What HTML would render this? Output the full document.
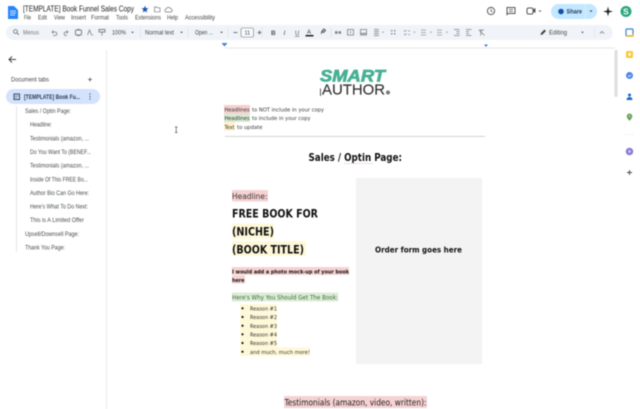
<!DOCTYPE html>
<html><head><meta charset="utf-8"><style>
html,body{margin:0;padding:0;background:#fff;width:640px;height:409px;overflow:hidden}
svg{display:block;filter:blur(.45px)}
text{font-family:"Liberation Sans",sans-serif;fill:#3c4043}
.m{font-size:6.300px;fill:#444746}
.s{font-size:6.300px;fill:#444746}
.t{font-size:6px;fill:#4a4d50}
.o{font-family:"DejaVu Sans",sans-serif}
.d{font-family:"DejaVu Sans",sans-serif;font-size:5.600px;fill:#333}
.b{font-family:"DejaVu Sans",sans-serif;font-weight:bold;fill:#111}
</style></head><body>
<svg width="640" height="409" viewBox="0 0 640 409" xmlns="http://www.w3.org/2000/svg">
<rect width="640" height="409" fill="#fff"/>
<!-- header -->
<path d="M8 6h6l4 4v9H8z" fill="#2684fc"/><path d="M10 11h6M10 13h6M10 15h5" stroke="#fff" stroke-width=".8"/>
<text x="23" y="11.500" font-size="8" textLength="111" lengthAdjust="spacingAndGlyphs" style="fill:#202124">[TEMPLATE] Book Funnel Sales Copy</text>
<path d="M145 5.800l1 2.300 2.500.2-1.900 1.600.6 2.500-2.200-1.300-2.200 1.300.6-2.500-1.900-1.600 2.500-.2z" fill="#1a56b8"/>
<path d="M154.500 7h2.200l.8.8h2.500v4h-5.500z" fill="none" stroke="#777" stroke-width=".7"/>
<path d="M167 12h3.500a1.600 1.600 0 0 0 .2-3.200 2.400 2.400 0 0 0-4.400 0 1.600 1.600 0 0 0 .7 3.200z" fill="none" stroke="#777" stroke-width=".7"/>
<text class="m" x="24" y="19.500" textLength="7" lengthAdjust="spacingAndGlyphs">File</text>
<text class="m" x="38" y="19.500" textLength="9" lengthAdjust="spacingAndGlyphs">Edit</text>
<text class="m" x="54" y="19.500" textLength="11" lengthAdjust="spacingAndGlyphs">View</text>
<text class="m" x="71" y="19.500" textLength="15" lengthAdjust="spacingAndGlyphs">Insert</text>
<text class="m" x="91" y="19.500" textLength="18" lengthAdjust="spacingAndGlyphs">Format</text>
<text class="m" x="116" y="19.500" textLength="12" lengthAdjust="spacingAndGlyphs">Tools</text>
<text class="m" x="135" y="19.500" textLength="26" lengthAdjust="spacingAndGlyphs">Extensions</text>
<text class="m" x="167" y="19.500" textLength="11" lengthAdjust="spacingAndGlyphs">Help</text>
<text class="m" x="185" y="19.500" textLength="30" lengthAdjust="spacingAndGlyphs">Accessibility</text>
<!-- right header -->
<circle cx="491" cy="11" r="3.600" fill="none" stroke="#555" stroke-width="1"/><path d="M491 9v2l1.500 1" stroke="#555" stroke-width=".8" fill="none"/>
<path d="M507 7.500h8v6h-7l-1 1z" fill="none" stroke="#555" stroke-width="1"/><path d="M509 9.500h4M509 11.500h4" stroke="#555" stroke-width=".7"/>
<rect x="527" y="8" width="6" height="6" rx="1.500" fill="none" stroke="#555" stroke-width="1"/><path d="M533 9.500l2.500-1.500v5l-2.500-1.500z" fill="#555"/>
<path d="M538.500 10.500h3l-1.500 1.500z" fill="#555"/>
<rect x="551" y="4" width="46" height="15" rx="7.500" fill="#c2e7ff"/>
<path d="M585.500 4v15" stroke="#e8f4fd" stroke-width=".6"/>
<circle cx="561" cy="11.500" r="2.800" fill="#174ea6"/>
<text x="566.500" y="13.500" font-size="6" font-weight="bold" textLength="15.500" lengthAdjust="spacingAndGlyphs" style="fill:#1f3a5f">Share</text>
<path d="M589.500 10.500h3l-1.500 1.500z" fill="#333"/>
<path d="M608 6.500l1 4 4 1-4 1-1 4-1-4-4-1 4-1z" fill="#222"/>
<circle cx="626" cy="11.500" r="5.500" fill="#2aa77d"/>
<text x="623" y="14.500" font-size="8.500" font-weight="bold" style="fill:#fff">S</text>
<!-- toolbar -->
<rect x="6" y="25" width="287" height="15" rx="7.500" fill="#f0f4f9"/>
<rect x="200" y="25" width="413" height="15" rx="7.500" fill="#f0f4f9"/>
<circle cx="15.500" cy="31.500" r="1.900" fill="none" stroke="#666" stroke-width=".8"/><path d="M17 33l1.800 1.800" stroke="#666" stroke-width=".8"/>
<text class="s" x="23" y="34.500" textLength="16" lengthAdjust="spacingAndGlyphs" style="fill:#777">Menus</text>
<g opacity=".72">
<path d="M52 32h3.500a1.800 1.800 0 0 1 0 3.500H53M53.500 30.500L52 32l1.500 1.500" fill="none" stroke="#555" stroke-width=".8"/>
<path d="M68 32h-2.500a1.800 1.800 0 0 0 0 3.500H67M66.500 30.500L68 32l-1.500 1.500" fill="none" stroke="#555" stroke-width=".8"/>
<rect x="75.500" y="30" width="6" height="5" rx="1" fill="none" stroke="#555" stroke-width="1"/><path d="M77 29.500h3M77 35.500h3" stroke="#555" stroke-width="1"/>
<path d="M87.500 35l2-5 2 5M92 35.500l1-1" fill="none" stroke="#555" stroke-width=".8"/>
<path d="M99 29.500h6v2.500h-6zM102 32v3.500" fill="none" stroke="#555" stroke-width=".9"/>
</g>
<text class="s" x="112" y="34.500" textLength="14" lengthAdjust="spacingAndGlyphs">100%</text>
<path d="M131 31.800h3l-1.500 1.500z" fill="#555"/>
<path d="M140.500 27.500v10M188 27.500v10M228 27.500v10M262 27.500v10M331 27.500v10M376 27.500v10" stroke="#dadce0" stroke-width=".6"/>
<text class="s" x="145" y="34.500" textLength="29" lengthAdjust="spacingAndGlyphs">Normal text</text>
<path d="M180 31.800h3l-1.500 1.500z" fill="#555"/>
<text class="s" x="195" y="34.500" textLength="18" lengthAdjust="spacingAndGlyphs">Open ...</text>
<path d="M220 31.800h3l-1.500 1.500z" fill="#555"/>
<path d="M233.500 32.500h4" stroke="#555" stroke-width=".8"/>
<rect x="241" y="28" width="12.500" height="9" rx="1.500" fill="#f8fafd" stroke="#777" stroke-width=".6"/>
<text x="244.500" y="34.500" font-size="5.500" style="fill:#444">11</text>
<path d="M257.500 32.500h4M259.500 30.500v4" stroke="#555" stroke-width=".8"/>
<text x="271" y="35" font-size="6.500" font-weight="bold" style="fill:#555">B</text>
<text x="283.500" y="35" font-size="6.500" font-style="italic" style="fill:#444">I</text>
<text x="295" y="35" font-size="6" text-decoration="underline" style="fill:#555">U</text>
<text x="307" y="34" font-size="6" style="fill:#333">A</text><rect x="305.500" y="35" width="8" height="1.400" fill="#111"/>
<path d="M322 31l2-2 1.500 1.500-2 2zM322 31.500l-.8 2.300" stroke="#444" stroke-width=".9" fill="none"/>
<g opacity=".72">
<path d="M335 32.500h6" stroke="#555" stroke-width="2.400" stroke-dasharray="2.500 1"/>
<rect x="347.500" y="29.500" width="6" height="5.500" fill="none" stroke="#555" stroke-width=".8"/><path d="M350.500 31v2.500" stroke="#555" stroke-width=".8"/>
<rect x="360.500" y="29.500" width="6" height="5.500" fill="none" stroke="#555" stroke-width=".8"/><path d="M361 33.500h5" stroke="#555" stroke-width="1.200"/>
<path d="M374 29.500h5M374 31.500h5M374 33.500h5M374 35.500h5" stroke="#555" stroke-width=".7"/><path d="M382 31.800h2l-1 1.200z" fill="#555"/>
<path d="M391 30h1.500v1.500H391zM394 30h1.500v1.500H394zM391 33h1.500v1.500H391zM394 33h1.500v1.500H394z" fill="#666"/>
<path d="M404 30.500l1 1 1.500-1.500M404 34l1 1 1.500-1.500M408 31h2M408 34.500h2" stroke="#666" stroke-width=".7" fill="none"/><path d="M413.500 31.800h2l-1 1.200z" fill="#555"/>
<path d="M421 30h5M421 32.500h5M421 35h5" stroke="#777" stroke-width=".7"/><path d="M430 31.800h2l-1 1.200z" fill="#555"/>
<path d="M437 30h5M437 32.500h5M437 35h5" stroke="#777" stroke-width=".7"/><path d="M446 31.800h2l-1 1.200z" fill="#555"/>
<path d="M454 29.500h5.500M456.500 31.500h3M456.500 33.500h3M454 35.500h5.500" stroke="#555" stroke-width=".8"/>
<path d="M466 29.500h5.500M466 31.500h3M466 33.500h3M466 35.500h5.500" stroke="#555" stroke-width=".8"/>
<path d="M479 30h5M481.500 30l-1 5.500M479 30l5.500 5.500" stroke="#555" stroke-width=".8"/>
</g>
<path d="M540.500 35l.5-2 3.500-3.500 1.500 1.500-3.500 3.500z" fill="#444"/>
<text class="s" x="549" y="34.500" textLength="18" lengthAdjust="spacingAndGlyphs">Editing</text>
<path d="M581 31.800h3l-1.500 1.500z" fill="#555"/>
<path d="M594.500 27.500v10" stroke="#dadce0" stroke-width=".6"/>
<path d="M600 33.500l2-2 2 2" fill="none" stroke="#666" stroke-width=".7"/>
<!-- side-panel icons -->
<rect x="626" y="29" width="7" height="7" rx="1" fill="none" stroke="#3b82d6" stroke-width="1.200"/><path d="M626 36h7v-2" fill="none" stroke="#f0b400" stroke-width="1.200"/>
<rect x="626" y="51" width="7" height="7" rx="1.200" fill="#f8c93a"/><rect x="628.500" y="53" width="2.200" height="2.800" fill="#fff"/>
<circle cx="629.500" cy="75.500" r="3.500" fill="#4a86e8"/><path d="M628 75.500l1.200 1.200 2-2" stroke="#fff" stroke-width=".7" fill="none"/>
<circle cx="629.500" cy="95" r="1.500" fill="#1967d2"/><path d="M626.500 100c0-4 6-4 6 0z" fill="#1967d2"/>
<path d="M629.500 113.500a2.800 2.800 0 0 0-2.800 2.800c0 2 2.800 4.500 2.800 4.500s2.800-2.500 2.800-4.500a2.800 2.800 0 0 0-2.800-2.800z" fill="#5fa463"/><circle cx="629.500" cy="116.200" r="1" fill="#f6c343"/>
<path d="M625 134.500h9" stroke="#eceff1" stroke-width=".6"/>
<circle cx="629.500" cy="151.500" r="3.800" fill="#8a7fd8"/><circle cx="629.500" cy="151.500" r="1.200" fill="#e0dcf8"/>
<path d="M627 172.500h5M629.500 170v5" stroke="#444" stroke-width=".9"/>
<!-- ruler / separators -->
<path d="M225 48h390" stroke="#dfe1e5" stroke-width=".8"/>
<path d="M222 43.500h5l-2.500 3z" fill="#4a7fd0"/><rect x="222" y="43" width="5" height="1.200" fill="#4a7fd0"/>
<path d="M484 44.500h4l-2 2.500z" fill="#4a7fd0"/>
<rect x="106" y="50" width="1" height="359" fill="#e6e8eb"/>
<rect x="614.500" y="50" width="3" height="47" rx="1" fill="#dedede"/>
<!-- sidebar -->
<path d="M16 59.500H9M12 56.500l-3 3 3 3" fill="none" stroke="#444" stroke-width="1"/>
<text x="11" y="81.500" font-size="6.200" textLength="38" lengthAdjust="spacingAndGlyphs" style="fill:#444">Document tabs</text>
<path d="M88 79.500h4M90 77.500v4" stroke="#555" stroke-width=".8"/>
<rect x="6" y="89" width="94" height="15" rx="7.500" fill="#d3e3fd"/>
<rect x="14" y="94" width="5.500" height="5.500" fill="none" stroke="#334" stroke-width=".9"/>
<path d="M15 96h3.500M15 97.700h2" stroke="#334" stroke-width=".5"/>
<text x="24" y="99" font-size="6.200" font-weight="bold" textLength="56" lengthAdjust="spacingAndGlyphs" style="fill:#2c3c52">[TEMPLATE] Book Fu...</text>
<circle cx="90" cy="94" r=".6" fill="#444"/><circle cx="90" cy="96.500" r=".6" fill="#444"/><circle cx="90" cy="99" r=".6" fill="#444"/>
<rect x="16" y="106" width="1" height="146" fill="#e3e5e8"/>
<text class="t" x="25" y="113" textLength="46" lengthAdjust="spacingAndGlyphs">Sales / Optin Page:</text>
<text class="t" x="30" y="126.700" textLength="22" lengthAdjust="spacingAndGlyphs">Headline:</text>
<text class="t" x="30" y="140.300" textLength="59" lengthAdjust="spacingAndGlyphs">Testimonials (amazon, ...</text>
<text class="t" x="30" y="154" textLength="61" lengthAdjust="spacingAndGlyphs">Do You Want To (BENEF...</text>
<text class="t" x="30" y="167.600" textLength="59" lengthAdjust="spacingAndGlyphs">Testimonials (amazon, ...</text>
<text class="t" x="30" y="181.300" textLength="58" lengthAdjust="spacingAndGlyphs">Inside Of This FREE Bo...</text>
<text class="t" x="30" y="195" textLength="59" lengthAdjust="spacingAndGlyphs">Author Bio Can Go Here:</text>
<text class="t" x="30" y="208.600" textLength="58" lengthAdjust="spacingAndGlyphs">Here's What To Do Next:</text>
<text class="t" x="30" y="222.200" textLength="54" lengthAdjust="spacingAndGlyphs">This is A Limited Offer</text>
<text class="t" x="25" y="236" textLength="54" lengthAdjust="spacingAndGlyphs">Upsell/Downsell Page:</text>
<text class="t" x="25" y="249.500" textLength="40" lengthAdjust="spacingAndGlyphs">Thank You Page:</text>
<!-- cursor -->
<path d="M175 127h2.500M175 132.500h2.500M176.200 127v5.500" stroke="#555" stroke-width=".7"/>
<!-- logo -->
<text x="320" y="81.500" font-size="17" font-weight="bold" font-style="italic" textLength="65" lengthAdjust="spacingAndGlyphs" style="fill:#46b094;stroke:#46b094;stroke-width:.7">SMART</text>
<path d="M320.500 88.500v7.500" stroke="#333" stroke-width=".8"/>
<text x="322" y="94.500" font-size="14.600" textLength="63" lengthAdjust="spacingAndGlyphs" style="fill:#333;stroke:#333;stroke-width:.15">AUTHOR</text>
<circle cx="388" cy="92.500" r="2" fill="#777"/>
<!-- legend -->
<rect x="224" y="105" width="26" height="8.500" fill="#f5cfcf"/>
<text class="d" x="224.500" y="111.700" textLength="25" lengthAdjust="spacingAndGlyphs">Headlines</text>
<text class="d" x="252" y="111.700" textLength="72" lengthAdjust="spacingAndGlyphs" style="fill:#3a3a3a">to NOT include in your copy</text>
<rect x="224" y="113.500" width="26" height="8.500" fill="#d9ead3"/>
<text class="d" x="224.500" y="120.200" textLength="25" lengthAdjust="spacingAndGlyphs">Headlines</text>
<text class="d" x="252" y="120.200" textLength="58.500" lengthAdjust="spacingAndGlyphs" style="fill:#3a3a3a">to include in your copy</text>
<rect x="224" y="122" width="11" height="8.500" fill="#fff2cc"/>
<text class="d" x="224.500" y="128.800" textLength="10" lengthAdjust="spacingAndGlyphs">Text</text>
<text class="d" x="237" y="128.800" textLength="25.500" lengthAdjust="spacingAndGlyphs" style="fill:#3a3a3a">to update</text>
<rect x="225" y="136" width="260" height=".8" fill="#c9c9c9"/>
<!-- heading -->
<text class="b" x="308.500" y="161" font-size="10.500" textLength="93.500" lengthAdjust="spacingAndGlyphs">Sales / Optin Page:</text>
<path d="M344 163.500h29" stroke="#e0a0a0" stroke-width=".6" stroke-dasharray="1.500 .8"/>
<!-- form box -->
<rect x="356" y="178" width="126" height="186" fill="#f3f3f3"/>
<text class="b" x="375" y="252.500" font-size="8.300" textLength="87" lengthAdjust="spacingAndGlyphs">Order form goes here</text>
<!-- left col -->
<rect x="232" y="190" width="36" height="11.500" fill="#f6d2d2"/>
<text class="o" x="232" y="199" font-size="8" textLength="35.500" lengthAdjust="spacingAndGlyphs" style="fill:#333">Headline:</text>
<text class="b" x="232" y="217.700" font-size="11.500" textLength="86" lengthAdjust="spacingAndGlyphs">FREE BOOK FOR</text>
<rect x="232" y="223.500" width="42" height="15" fill="#fff8d8"/>
<text class="b" x="232" y="235.700" font-size="11.500" textLength="42" lengthAdjust="spacingAndGlyphs">(NICHE)</text>
<rect x="232" y="241" width="74" height="15" fill="#fff8d8"/>
<text class="b" x="232" y="253.300" font-size="11.500" textLength="72" lengthAdjust="spacingAndGlyphs">(BOOK TITLE)</text>
<rect x="232" y="267" width="117" height="8" fill="#f6d2d2"/>
<rect x="232" y="275.500" width="13" height="8" fill="#f6d2d2"/>
<text class="b" x="232" y="273.300" font-size="5.600" textLength="117" lengthAdjust="spacingAndGlyphs" style="fill:#111">I would add a photo mock-up of your book</text>
<text class="b" x="232" y="282" font-size="5.600" textLength="12.500" lengthAdjust="spacingAndGlyphs" style="fill:#111">here</text>
<rect x="232" y="292.500" width="106" height="9" fill="#dcecd6"/>
<text class="o" x="232" y="299.700" font-size="6.200" textLength="106" lengthAdjust="spacingAndGlyphs" style="fill:#3e6b3a">Here's Why You Should Get The Book:</text>
<!-- list -->
<g fill="#fff8d8">
<rect x="240" y="304" width="37" height="8.700"/><rect x="240" y="312.700" width="37" height="8.700"/><rect x="240" y="321.400" width="37" height="8.700"/><rect x="240" y="330" width="37" height="8.700"/><rect x="240" y="338.700" width="37" height="8.700"/><rect x="240" y="347.400" width="70" height="8.700"/>
</g>
<g fill="#111">
<circle cx="242.500" cy="308.300" r="1.100"/><circle cx="242.500" cy="317" r="1.100"/><circle cx="242.500" cy="325.700" r="1.100"/><circle cx="242.500" cy="334.300" r="1.100"/><circle cx="242.500" cy="343" r="1.100"/><circle cx="242.500" cy="351.700" r="1.100"/>
</g>
<text class="d" x="250" y="310.500" textLength="27" lengthAdjust="spacingAndGlyphs">Reason #1</text>
<text class="d" x="250" y="319.200" textLength="27" lengthAdjust="spacingAndGlyphs">Reason #2</text>
<text class="d" x="250" y="327.900" textLength="27" lengthAdjust="spacingAndGlyphs">Reason #3</text>
<text class="d" x="250" y="336.500" textLength="27" lengthAdjust="spacingAndGlyphs">Reason #4</text>
<text class="d" x="250" y="345.200" textLength="27" lengthAdjust="spacingAndGlyphs">Reason #5</text>
<text class="d" x="250" y="353.900" textLength="60" lengthAdjust="spacingAndGlyphs">and much, much more!</text>
<!-- testimonials -->
<rect x="284" y="396" width="143" height="12" fill="#f6d2d2"/>
<text class="o" x="284.500" y="405.500" font-size="8.400" textLength="142" lengthAdjust="spacingAndGlyphs" style="fill:#222">Testimonials (amazon, video, written):</text>
</svg>
</body></html>
